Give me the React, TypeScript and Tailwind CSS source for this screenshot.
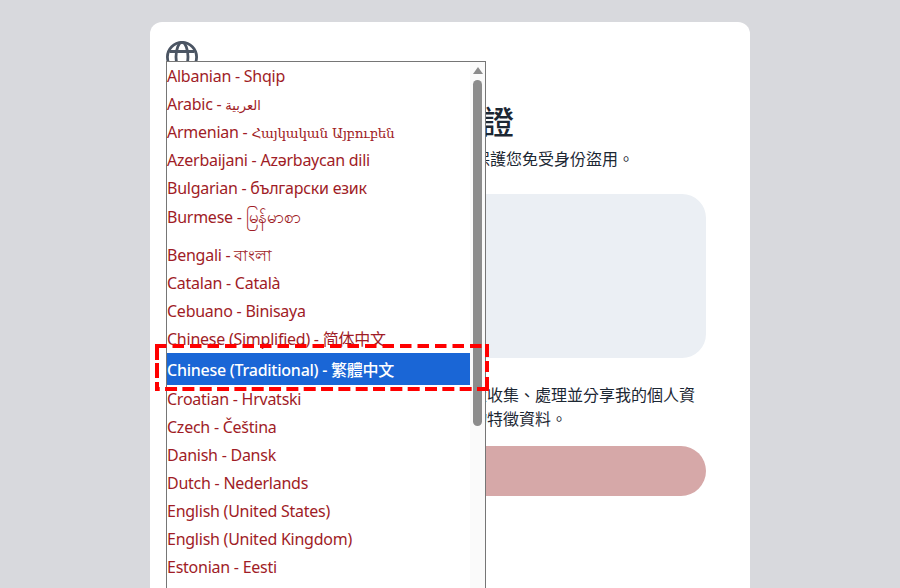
import React from 'react';

const languages: { label: string; native: string; nativeClass?: string; tall?: boolean; selected?: boolean }[] = [
  { label: 'Albanian - ', native: 'Shqip' },
  { label: 'Arabic - ', native: 'العربية', nativeClass: "font-['DejaVu_Sans'] text-[13px]" },
  { label: 'Armenian - ', native: 'Հայկական Այբուբեն', nativeClass: "font-['DejaVu_Serif'] text-[13.6px]" },
  { label: 'Azerbaijani - ', native: 'Azərbaycan dili' },
  { label: 'Bulgarian - ', native: 'български език' },
  { label: 'Burmese - ', native: 'မြန်မာစာ', nativeClass: 'text-[17px]', tall: true },
  { label: 'Bengali - ', native: 'বাংলা' },
  { label: 'Catalan - ', native: 'Català' },
  { label: 'Cebuano - ', native: 'Binisaya' },
  { label: 'Chinese (Simplified) - ', native: '简体中文' },
  { label: 'Chinese (Traditional) - ', native: '繁體中文', selected: true },
  { label: 'Croatian - ', native: 'Hrvatski' },
  { label: 'Czech - ', native: 'Čeština' },
  { label: 'Danish - ', native: 'Dansk' },
  { label: 'Dutch - ', native: 'Nederlands' },
  { label: 'English (United States)', native: '' },
  { label: 'English (United Kingdom)', native: '' },
  { label: 'Estonian - ', native: 'Eesti' },
  { label: 'Filipino - ', native: 'Tagalog' },
];

const App: React.FC = () => {
  return (
    <div className="h-[588px] overflow-hidden bg-[#d8d9dd] px-[150px] pt-[22px] font-['Noto_Sans','Noto_Sans_CJK_TC',sans-serif] text-[#1c2733]">
      <div className="relative h-[566px] rounded-t-xl bg-white px-[44px] pt-[80px]">
        {/* icon sits in the card corner, the open listbox covers its lower half */}
        <svg
          className="absolute left-[16px] top-[19px] h-8 w-8 text-[#4b5563]"
          viewBox="0 0 32 32"
          fill="none"
          stroke="currentColor"
          strokeWidth="2.8"
        >
          <circle cx="16" cy="16" r="14.6" />
          <ellipse cx="16" cy="16" rx="6" ry="14.6" />
          <path d="M3.5 10.5h25M3.5 21.5h25" />
        </svg>

        <h1 className="text-[32px] font-medium leading-10 whitespace-nowrap">進行生物特徵身份驗證</h1>
        <p className="mt-[5px] pl-[136px] text-base leading-6 whitespace-nowrap">我們需要這項資訊來保護您免受身份盜用。</p>
        <div className="mt-[23px] h-[164px] rounded-3xl bg-[#ebeff4]" />
        <p className="mt-[25px] pl-[133px] text-base leading-6 whitespace-nowrap">
          我同意依據隱私權政策收集、處理並分享我的個人資
          <br />
          料，包括我的臉部生物特徵資料。
        </p>
        <div className="mt-[15px] h-[50px] rounded-full bg-[#d6a8a8]" />

        {/* native style listbox */}
        <div className="absolute left-[16px] top-[39px] flex h-[540px] w-[320px] border border-[#767676] bg-white">
          <ul className="w-[303px] shrink-0 text-base tracking-[-0.25px] text-[#a01c26]">
            {languages.map((lang) => (
              <li
                key={lang.label}
                className={
                  lang.selected
                    ? 'h-8 whitespace-nowrap bg-[#1a66d6] leading-[34px] font-medium text-white'
                    : lang.tall
                      ? 'h-[39px] whitespace-nowrap pt-[1px] leading-7'
                      : 'h-7 whitespace-nowrap leading-7'
                }
              >
                {lang.label}
                <span className={lang.nativeClass}>{lang.native}</span>
              </li>
            ))}
          </ul>
          <div className="flex w-[15px] flex-col items-center bg-[#fafafa] pt-[5px]">
            <div className="h-0 w-0 border-x-[5px] border-b-[7px] border-x-transparent border-b-[#8c8c8c]" />
            <div className="mt-[6px] h-[346px] w-[9px] rounded-full bg-[#8c8c8c]" />
          </div>
        </div>

        {/* focus marker over the selected option */}
        <svg className="absolute left-[5px] top-[322px] h-[47px] w-[334px]" viewBox="0 0 334 47" fill="none" stroke="#ff0000" strokeWidth="4">
          <path d="M0 2H334" strokeDasharray="11.5 6" />
          <path d="M332 0V47" strokeDasharray="13 4 11 5 14" />
          <path d="M334 45H0" strokeDasharray="12 5.33" />
          <path d="M2 1V47" strokeDasharray="15 3 15 4 8" />
        </svg>
      </div>
    </div>
  );
};

export default App;
